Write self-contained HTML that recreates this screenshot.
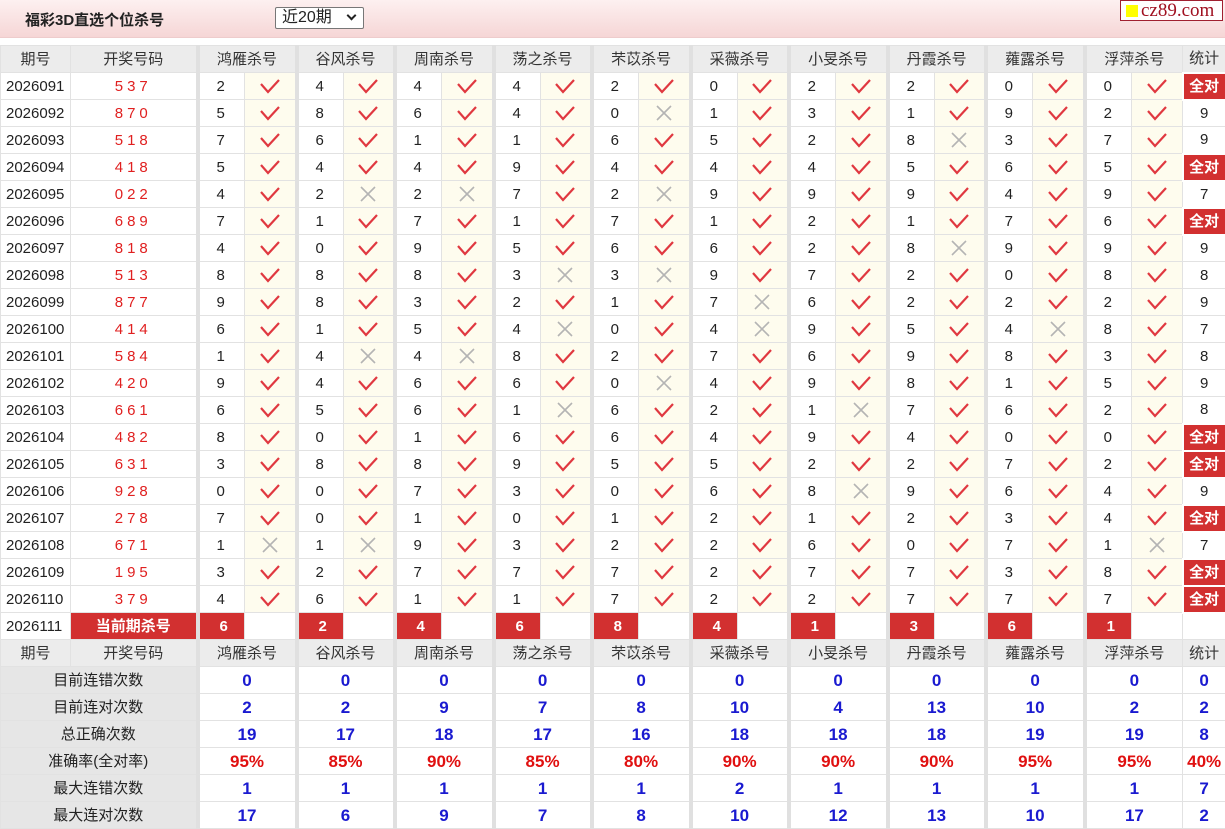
<!DOCTYPE html>
<html><head><meta charset="utf-8">
<style>
*{margin:0;padding:0;box-sizing:border-box}
body{width:1225px;height:827px;overflow:hidden;background:#fff;font-family:"Liberation Sans","Noto Sans CJK SC",sans-serif;font-size:15px;color:#222}
.top{position:absolute;left:0;top:0;width:1225px;height:38px;background:linear-gradient(#fdf0f0,#f6d6d6);border-bottom:1px solid #ecc}
.title{position:absolute;left:25px;top:9px;font-weight:bold;font-size:15px;color:#222}
.sel{position:absolute;left:275px;top:7px;width:89px;height:22px;border:1px solid #777;border-radius:2px;background:#fff;font-size:16px;padding-left:6px;line-height:20px}
.sel span{position:absolute;right:8px;top:4px;width:7px;height:7px;border-right:2px solid #222;border-bottom:2px solid #222;transform:rotate(45deg)}
.logo{position:absolute;left:1120px;top:0;width:103px;height:21px;border:1px solid #a02030;background:#fff;font-family:"Liberation Serif",serif;font-size:19px;color:#a01020;line-height:19px;padding-left:20px;overflow:hidden;white-space:nowrap}
.logo:before{content:"";position:absolute;left:5px;top:4px;width:12px;height:12px;background:#ff0}
table{position:absolute;left:0;top:45px;width:1225px;border-collapse:collapse;table-layout:fixed}
td{border:1px solid #e2e2e2;height:27px;padding:0;text-align:center;vertical-align:middle;line-height:25px;white-space:nowrap;overflow:hidden}
tr{height:27px}
.h td{background:#ececec;color:#333}
td.g{border-left:4px solid #e0e0e0}
.p{text-align:left;padding-left:5px}
.d{color:#e02020;letter-spacing:4px}
.n{text-align:left;padding-left:17px}
.y,.x{background:#fefcee}
svg{display:block;margin:0 auto}
.y svg{stroke:#e03840;stroke-width:2.2;fill:none}
.x svg{stroke:#b4b4b4;stroke-width:1.6;fill:none}
.q{background:#d23030;color:#fff;font-weight:bold}
.qa{background:#d23030;color:#fff;font-weight:bold;text-align:left;padding-left:20px}
.s{background:#fff}
.lab{background:#e6e6e6;color:#222}
.b{color:#1a1ad0;font-weight:bold;font-size:17px}
.r{color:#e01010;font-weight:bold;font-size:17px}
.ok{background:#d23030;color:#fff;font-weight:bold;border:2px solid #fff}
</style></head><body>
<div class="top"><div class="title">福彩3D直选个位杀号</div><div class="sel">近20期<span></span></div><div class="logo">cz89.com</div></div>
<svg width="0" height="0" style="position:absolute"><defs>
<symbol id="c" viewBox="0 0 24 18"><path d="M3 7 L10 15 L21 3"/></symbol>
<symbol id="k" viewBox="0 0 24 18"><path d="M5 2 L19 16 M19 2 L5 16"/></symbol>
</defs></svg>
<table>
<colgroup><col style="width:70px"><col style="width:127px">
<col style="width:47px"><col style="width:52px"><col style="width:47px"><col style="width:51px"><col style="width:47px"><col style="width:52px"><col style="width:47px"><col style="width:51px"><col style="width:47px"><col style="width:52px"><col style="width:47px"><col style="width:51px"><col style="width:47px"><col style="width:52px"><col style="width:47px"><col style="width:51px"><col style="width:47px"><col style="width:52px"><col style="width:47px"><col style="width:51px">
<col style="width:43px"></colgroup>
<tr class="h"><td>期号</td><td>开奖号码</td><td class="g" colspan="2">鸿雁杀号</td><td class="g" colspan="2">谷风杀号</td><td class="g" colspan="2">周南杀号</td><td class="g" colspan="2">荡之杀号</td><td class="g" colspan="2">芣苡杀号</td><td class="g" colspan="2">采薇杀号</td><td class="g" colspan="2">小旻杀号</td><td class="g" colspan="2">丹霞杀号</td><td class="g" colspan="2">蕹露杀号</td><td class="g" colspan="2">浮萍杀号</td><td>统计</td></tr>
<tr><td class="p">2026091</td><td class="d">537</td><td class="g n">2</td><td class="y"><svg width="24" height="18"><use href="#c"/></svg></td><td class="g n">4</td><td class="y"><svg width="24" height="18"><use href="#c"/></svg></td><td class="g n">4</td><td class="y"><svg width="24" height="18"><use href="#c"/></svg></td><td class="g n">4</td><td class="y"><svg width="24" height="18"><use href="#c"/></svg></td><td class="g n">2</td><td class="y"><svg width="24" height="18"><use href="#c"/></svg></td><td class="g n">0</td><td class="y"><svg width="24" height="18"><use href="#c"/></svg></td><td class="g n">2</td><td class="y"><svg width="24" height="18"><use href="#c"/></svg></td><td class="g n">2</td><td class="y"><svg width="24" height="18"><use href="#c"/></svg></td><td class="g n">0</td><td class="y"><svg width="24" height="18"><use href="#c"/></svg></td><td class="g n">0</td><td class="y"><svg width="24" height="18"><use href="#c"/></svg></td><td class="ok">全对</td></tr>
<tr><td class="p">2026092</td><td class="d">870</td><td class="g n">5</td><td class="y"><svg width="24" height="18"><use href="#c"/></svg></td><td class="g n">8</td><td class="y"><svg width="24" height="18"><use href="#c"/></svg></td><td class="g n">6</td><td class="y"><svg width="24" height="18"><use href="#c"/></svg></td><td class="g n">4</td><td class="y"><svg width="24" height="18"><use href="#c"/></svg></td><td class="g n">0</td><td class="x"><svg width="24" height="18"><use href="#k"/></svg></td><td class="g n">1</td><td class="y"><svg width="24" height="18"><use href="#c"/></svg></td><td class="g n">3</td><td class="y"><svg width="24" height="18"><use href="#c"/></svg></td><td class="g n">1</td><td class="y"><svg width="24" height="18"><use href="#c"/></svg></td><td class="g n">9</td><td class="y"><svg width="24" height="18"><use href="#c"/></svg></td><td class="g n">2</td><td class="y"><svg width="24" height="18"><use href="#c"/></svg></td><td>9</td></tr>
<tr><td class="p">2026093</td><td class="d">518</td><td class="g n">7</td><td class="y"><svg width="24" height="18"><use href="#c"/></svg></td><td class="g n">6</td><td class="y"><svg width="24" height="18"><use href="#c"/></svg></td><td class="g n">1</td><td class="y"><svg width="24" height="18"><use href="#c"/></svg></td><td class="g n">1</td><td class="y"><svg width="24" height="18"><use href="#c"/></svg></td><td class="g n">6</td><td class="y"><svg width="24" height="18"><use href="#c"/></svg></td><td class="g n">5</td><td class="y"><svg width="24" height="18"><use href="#c"/></svg></td><td class="g n">2</td><td class="y"><svg width="24" height="18"><use href="#c"/></svg></td><td class="g n">8</td><td class="x"><svg width="24" height="18"><use href="#k"/></svg></td><td class="g n">3</td><td class="y"><svg width="24" height="18"><use href="#c"/></svg></td><td class="g n">7</td><td class="y"><svg width="24" height="18"><use href="#c"/></svg></td><td>9</td></tr>
<tr><td class="p">2026094</td><td class="d">418</td><td class="g n">5</td><td class="y"><svg width="24" height="18"><use href="#c"/></svg></td><td class="g n">4</td><td class="y"><svg width="24" height="18"><use href="#c"/></svg></td><td class="g n">4</td><td class="y"><svg width="24" height="18"><use href="#c"/></svg></td><td class="g n">9</td><td class="y"><svg width="24" height="18"><use href="#c"/></svg></td><td class="g n">4</td><td class="y"><svg width="24" height="18"><use href="#c"/></svg></td><td class="g n">4</td><td class="y"><svg width="24" height="18"><use href="#c"/></svg></td><td class="g n">4</td><td class="y"><svg width="24" height="18"><use href="#c"/></svg></td><td class="g n">5</td><td class="y"><svg width="24" height="18"><use href="#c"/></svg></td><td class="g n">6</td><td class="y"><svg width="24" height="18"><use href="#c"/></svg></td><td class="g n">5</td><td class="y"><svg width="24" height="18"><use href="#c"/></svg></td><td class="ok">全对</td></tr>
<tr><td class="p">2026095</td><td class="d">022</td><td class="g n">4</td><td class="y"><svg width="24" height="18"><use href="#c"/></svg></td><td class="g n">2</td><td class="x"><svg width="24" height="18"><use href="#k"/></svg></td><td class="g n">2</td><td class="x"><svg width="24" height="18"><use href="#k"/></svg></td><td class="g n">7</td><td class="y"><svg width="24" height="18"><use href="#c"/></svg></td><td class="g n">2</td><td class="x"><svg width="24" height="18"><use href="#k"/></svg></td><td class="g n">9</td><td class="y"><svg width="24" height="18"><use href="#c"/></svg></td><td class="g n">9</td><td class="y"><svg width="24" height="18"><use href="#c"/></svg></td><td class="g n">9</td><td class="y"><svg width="24" height="18"><use href="#c"/></svg></td><td class="g n">4</td><td class="y"><svg width="24" height="18"><use href="#c"/></svg></td><td class="g n">9</td><td class="y"><svg width="24" height="18"><use href="#c"/></svg></td><td>7</td></tr>
<tr><td class="p">2026096</td><td class="d">689</td><td class="g n">7</td><td class="y"><svg width="24" height="18"><use href="#c"/></svg></td><td class="g n">1</td><td class="y"><svg width="24" height="18"><use href="#c"/></svg></td><td class="g n">7</td><td class="y"><svg width="24" height="18"><use href="#c"/></svg></td><td class="g n">1</td><td class="y"><svg width="24" height="18"><use href="#c"/></svg></td><td class="g n">7</td><td class="y"><svg width="24" height="18"><use href="#c"/></svg></td><td class="g n">1</td><td class="y"><svg width="24" height="18"><use href="#c"/></svg></td><td class="g n">2</td><td class="y"><svg width="24" height="18"><use href="#c"/></svg></td><td class="g n">1</td><td class="y"><svg width="24" height="18"><use href="#c"/></svg></td><td class="g n">7</td><td class="y"><svg width="24" height="18"><use href="#c"/></svg></td><td class="g n">6</td><td class="y"><svg width="24" height="18"><use href="#c"/></svg></td><td class="ok">全对</td></tr>
<tr><td class="p">2026097</td><td class="d">818</td><td class="g n">4</td><td class="y"><svg width="24" height="18"><use href="#c"/></svg></td><td class="g n">0</td><td class="y"><svg width="24" height="18"><use href="#c"/></svg></td><td class="g n">9</td><td class="y"><svg width="24" height="18"><use href="#c"/></svg></td><td class="g n">5</td><td class="y"><svg width="24" height="18"><use href="#c"/></svg></td><td class="g n">6</td><td class="y"><svg width="24" height="18"><use href="#c"/></svg></td><td class="g n">6</td><td class="y"><svg width="24" height="18"><use href="#c"/></svg></td><td class="g n">2</td><td class="y"><svg width="24" height="18"><use href="#c"/></svg></td><td class="g n">8</td><td class="x"><svg width="24" height="18"><use href="#k"/></svg></td><td class="g n">9</td><td class="y"><svg width="24" height="18"><use href="#c"/></svg></td><td class="g n">9</td><td class="y"><svg width="24" height="18"><use href="#c"/></svg></td><td>9</td></tr>
<tr><td class="p">2026098</td><td class="d">513</td><td class="g n">8</td><td class="y"><svg width="24" height="18"><use href="#c"/></svg></td><td class="g n">8</td><td class="y"><svg width="24" height="18"><use href="#c"/></svg></td><td class="g n">8</td><td class="y"><svg width="24" height="18"><use href="#c"/></svg></td><td class="g n">3</td><td class="x"><svg width="24" height="18"><use href="#k"/></svg></td><td class="g n">3</td><td class="x"><svg width="24" height="18"><use href="#k"/></svg></td><td class="g n">9</td><td class="y"><svg width="24" height="18"><use href="#c"/></svg></td><td class="g n">7</td><td class="y"><svg width="24" height="18"><use href="#c"/></svg></td><td class="g n">2</td><td class="y"><svg width="24" height="18"><use href="#c"/></svg></td><td class="g n">0</td><td class="y"><svg width="24" height="18"><use href="#c"/></svg></td><td class="g n">8</td><td class="y"><svg width="24" height="18"><use href="#c"/></svg></td><td>8</td></tr>
<tr><td class="p">2026099</td><td class="d">877</td><td class="g n">9</td><td class="y"><svg width="24" height="18"><use href="#c"/></svg></td><td class="g n">8</td><td class="y"><svg width="24" height="18"><use href="#c"/></svg></td><td class="g n">3</td><td class="y"><svg width="24" height="18"><use href="#c"/></svg></td><td class="g n">2</td><td class="y"><svg width="24" height="18"><use href="#c"/></svg></td><td class="g n">1</td><td class="y"><svg width="24" height="18"><use href="#c"/></svg></td><td class="g n">7</td><td class="x"><svg width="24" height="18"><use href="#k"/></svg></td><td class="g n">6</td><td class="y"><svg width="24" height="18"><use href="#c"/></svg></td><td class="g n">2</td><td class="y"><svg width="24" height="18"><use href="#c"/></svg></td><td class="g n">2</td><td class="y"><svg width="24" height="18"><use href="#c"/></svg></td><td class="g n">2</td><td class="y"><svg width="24" height="18"><use href="#c"/></svg></td><td>9</td></tr>
<tr><td class="p">2026100</td><td class="d">414</td><td class="g n">6</td><td class="y"><svg width="24" height="18"><use href="#c"/></svg></td><td class="g n">1</td><td class="y"><svg width="24" height="18"><use href="#c"/></svg></td><td class="g n">5</td><td class="y"><svg width="24" height="18"><use href="#c"/></svg></td><td class="g n">4</td><td class="x"><svg width="24" height="18"><use href="#k"/></svg></td><td class="g n">0</td><td class="y"><svg width="24" height="18"><use href="#c"/></svg></td><td class="g n">4</td><td class="x"><svg width="24" height="18"><use href="#k"/></svg></td><td class="g n">9</td><td class="y"><svg width="24" height="18"><use href="#c"/></svg></td><td class="g n">5</td><td class="y"><svg width="24" height="18"><use href="#c"/></svg></td><td class="g n">4</td><td class="x"><svg width="24" height="18"><use href="#k"/></svg></td><td class="g n">8</td><td class="y"><svg width="24" height="18"><use href="#c"/></svg></td><td>7</td></tr>
<tr><td class="p">2026101</td><td class="d">584</td><td class="g n">1</td><td class="y"><svg width="24" height="18"><use href="#c"/></svg></td><td class="g n">4</td><td class="x"><svg width="24" height="18"><use href="#k"/></svg></td><td class="g n">4</td><td class="x"><svg width="24" height="18"><use href="#k"/></svg></td><td class="g n">8</td><td class="y"><svg width="24" height="18"><use href="#c"/></svg></td><td class="g n">2</td><td class="y"><svg width="24" height="18"><use href="#c"/></svg></td><td class="g n">7</td><td class="y"><svg width="24" height="18"><use href="#c"/></svg></td><td class="g n">6</td><td class="y"><svg width="24" height="18"><use href="#c"/></svg></td><td class="g n">9</td><td class="y"><svg width="24" height="18"><use href="#c"/></svg></td><td class="g n">8</td><td class="y"><svg width="24" height="18"><use href="#c"/></svg></td><td class="g n">3</td><td class="y"><svg width="24" height="18"><use href="#c"/></svg></td><td>8</td></tr>
<tr><td class="p">2026102</td><td class="d">420</td><td class="g n">9</td><td class="y"><svg width="24" height="18"><use href="#c"/></svg></td><td class="g n">4</td><td class="y"><svg width="24" height="18"><use href="#c"/></svg></td><td class="g n">6</td><td class="y"><svg width="24" height="18"><use href="#c"/></svg></td><td class="g n">6</td><td class="y"><svg width="24" height="18"><use href="#c"/></svg></td><td class="g n">0</td><td class="x"><svg width="24" height="18"><use href="#k"/></svg></td><td class="g n">4</td><td class="y"><svg width="24" height="18"><use href="#c"/></svg></td><td class="g n">9</td><td class="y"><svg width="24" height="18"><use href="#c"/></svg></td><td class="g n">8</td><td class="y"><svg width="24" height="18"><use href="#c"/></svg></td><td class="g n">1</td><td class="y"><svg width="24" height="18"><use href="#c"/></svg></td><td class="g n">5</td><td class="y"><svg width="24" height="18"><use href="#c"/></svg></td><td>9</td></tr>
<tr><td class="p">2026103</td><td class="d">661</td><td class="g n">6</td><td class="y"><svg width="24" height="18"><use href="#c"/></svg></td><td class="g n">5</td><td class="y"><svg width="24" height="18"><use href="#c"/></svg></td><td class="g n">6</td><td class="y"><svg width="24" height="18"><use href="#c"/></svg></td><td class="g n">1</td><td class="x"><svg width="24" height="18"><use href="#k"/></svg></td><td class="g n">6</td><td class="y"><svg width="24" height="18"><use href="#c"/></svg></td><td class="g n">2</td><td class="y"><svg width="24" height="18"><use href="#c"/></svg></td><td class="g n">1</td><td class="x"><svg width="24" height="18"><use href="#k"/></svg></td><td class="g n">7</td><td class="y"><svg width="24" height="18"><use href="#c"/></svg></td><td class="g n">6</td><td class="y"><svg width="24" height="18"><use href="#c"/></svg></td><td class="g n">2</td><td class="y"><svg width="24" height="18"><use href="#c"/></svg></td><td>8</td></tr>
<tr><td class="p">2026104</td><td class="d">482</td><td class="g n">8</td><td class="y"><svg width="24" height="18"><use href="#c"/></svg></td><td class="g n">0</td><td class="y"><svg width="24" height="18"><use href="#c"/></svg></td><td class="g n">1</td><td class="y"><svg width="24" height="18"><use href="#c"/></svg></td><td class="g n">6</td><td class="y"><svg width="24" height="18"><use href="#c"/></svg></td><td class="g n">6</td><td class="y"><svg width="24" height="18"><use href="#c"/></svg></td><td class="g n">4</td><td class="y"><svg width="24" height="18"><use href="#c"/></svg></td><td class="g n">9</td><td class="y"><svg width="24" height="18"><use href="#c"/></svg></td><td class="g n">4</td><td class="y"><svg width="24" height="18"><use href="#c"/></svg></td><td class="g n">0</td><td class="y"><svg width="24" height="18"><use href="#c"/></svg></td><td class="g n">0</td><td class="y"><svg width="24" height="18"><use href="#c"/></svg></td><td class="ok">全对</td></tr>
<tr><td class="p">2026105</td><td class="d">631</td><td class="g n">3</td><td class="y"><svg width="24" height="18"><use href="#c"/></svg></td><td class="g n">8</td><td class="y"><svg width="24" height="18"><use href="#c"/></svg></td><td class="g n">8</td><td class="y"><svg width="24" height="18"><use href="#c"/></svg></td><td class="g n">9</td><td class="y"><svg width="24" height="18"><use href="#c"/></svg></td><td class="g n">5</td><td class="y"><svg width="24" height="18"><use href="#c"/></svg></td><td class="g n">5</td><td class="y"><svg width="24" height="18"><use href="#c"/></svg></td><td class="g n">2</td><td class="y"><svg width="24" height="18"><use href="#c"/></svg></td><td class="g n">2</td><td class="y"><svg width="24" height="18"><use href="#c"/></svg></td><td class="g n">7</td><td class="y"><svg width="24" height="18"><use href="#c"/></svg></td><td class="g n">2</td><td class="y"><svg width="24" height="18"><use href="#c"/></svg></td><td class="ok">全对</td></tr>
<tr><td class="p">2026106</td><td class="d">928</td><td class="g n">0</td><td class="y"><svg width="24" height="18"><use href="#c"/></svg></td><td class="g n">0</td><td class="y"><svg width="24" height="18"><use href="#c"/></svg></td><td class="g n">7</td><td class="y"><svg width="24" height="18"><use href="#c"/></svg></td><td class="g n">3</td><td class="y"><svg width="24" height="18"><use href="#c"/></svg></td><td class="g n">0</td><td class="y"><svg width="24" height="18"><use href="#c"/></svg></td><td class="g n">6</td><td class="y"><svg width="24" height="18"><use href="#c"/></svg></td><td class="g n">8</td><td class="x"><svg width="24" height="18"><use href="#k"/></svg></td><td class="g n">9</td><td class="y"><svg width="24" height="18"><use href="#c"/></svg></td><td class="g n">6</td><td class="y"><svg width="24" height="18"><use href="#c"/></svg></td><td class="g n">4</td><td class="y"><svg width="24" height="18"><use href="#c"/></svg></td><td>9</td></tr>
<tr><td class="p">2026107</td><td class="d">278</td><td class="g n">7</td><td class="y"><svg width="24" height="18"><use href="#c"/></svg></td><td class="g n">0</td><td class="y"><svg width="24" height="18"><use href="#c"/></svg></td><td class="g n">1</td><td class="y"><svg width="24" height="18"><use href="#c"/></svg></td><td class="g n">0</td><td class="y"><svg width="24" height="18"><use href="#c"/></svg></td><td class="g n">1</td><td class="y"><svg width="24" height="18"><use href="#c"/></svg></td><td class="g n">2</td><td class="y"><svg width="24" height="18"><use href="#c"/></svg></td><td class="g n">1</td><td class="y"><svg width="24" height="18"><use href="#c"/></svg></td><td class="g n">2</td><td class="y"><svg width="24" height="18"><use href="#c"/></svg></td><td class="g n">3</td><td class="y"><svg width="24" height="18"><use href="#c"/></svg></td><td class="g n">4</td><td class="y"><svg width="24" height="18"><use href="#c"/></svg></td><td class="ok">全对</td></tr>
<tr><td class="p">2026108</td><td class="d">671</td><td class="g n">1</td><td class="x"><svg width="24" height="18"><use href="#k"/></svg></td><td class="g n">1</td><td class="x"><svg width="24" height="18"><use href="#k"/></svg></td><td class="g n">9</td><td class="y"><svg width="24" height="18"><use href="#c"/></svg></td><td class="g n">3</td><td class="y"><svg width="24" height="18"><use href="#c"/></svg></td><td class="g n">2</td><td class="y"><svg width="24" height="18"><use href="#c"/></svg></td><td class="g n">2</td><td class="y"><svg width="24" height="18"><use href="#c"/></svg></td><td class="g n">6</td><td class="y"><svg width="24" height="18"><use href="#c"/></svg></td><td class="g n">0</td><td class="y"><svg width="24" height="18"><use href="#c"/></svg></td><td class="g n">7</td><td class="y"><svg width="24" height="18"><use href="#c"/></svg></td><td class="g n">1</td><td class="x"><svg width="24" height="18"><use href="#k"/></svg></td><td>7</td></tr>
<tr><td class="p">2026109</td><td class="d">195</td><td class="g n">3</td><td class="y"><svg width="24" height="18"><use href="#c"/></svg></td><td class="g n">2</td><td class="y"><svg width="24" height="18"><use href="#c"/></svg></td><td class="g n">7</td><td class="y"><svg width="24" height="18"><use href="#c"/></svg></td><td class="g n">7</td><td class="y"><svg width="24" height="18"><use href="#c"/></svg></td><td class="g n">7</td><td class="y"><svg width="24" height="18"><use href="#c"/></svg></td><td class="g n">2</td><td class="y"><svg width="24" height="18"><use href="#c"/></svg></td><td class="g n">7</td><td class="y"><svg width="24" height="18"><use href="#c"/></svg></td><td class="g n">7</td><td class="y"><svg width="24" height="18"><use href="#c"/></svg></td><td class="g n">3</td><td class="y"><svg width="24" height="18"><use href="#c"/></svg></td><td class="g n">8</td><td class="y"><svg width="24" height="18"><use href="#c"/></svg></td><td class="ok">全对</td></tr>
<tr><td class="p">2026110</td><td class="d">379</td><td class="g n">4</td><td class="y"><svg width="24" height="18"><use href="#c"/></svg></td><td class="g n">6</td><td class="y"><svg width="24" height="18"><use href="#c"/></svg></td><td class="g n">1</td><td class="y"><svg width="24" height="18"><use href="#c"/></svg></td><td class="g n">1</td><td class="y"><svg width="24" height="18"><use href="#c"/></svg></td><td class="g n">7</td><td class="y"><svg width="24" height="18"><use href="#c"/></svg></td><td class="g n">2</td><td class="y"><svg width="24" height="18"><use href="#c"/></svg></td><td class="g n">2</td><td class="y"><svg width="24" height="18"><use href="#c"/></svg></td><td class="g n">7</td><td class="y"><svg width="24" height="18"><use href="#c"/></svg></td><td class="g n">7</td><td class="y"><svg width="24" height="18"><use href="#c"/></svg></td><td class="g n">7</td><td class="y"><svg width="24" height="18"><use href="#c"/></svg></td><td class="ok">全对</td></tr>
<tr><td class="p">2026111</td><td class="q">当前期杀号</td><td class="g qa">6</td><td class="s"></td><td class="g qa">2</td><td class="s"></td><td class="g qa">4</td><td class="s"></td><td class="g qa">6</td><td class="s"></td><td class="g qa">8</td><td class="s"></td><td class="g qa">4</td><td class="s"></td><td class="g qa">1</td><td class="s"></td><td class="g qa">3</td><td class="s"></td><td class="g qa">6</td><td class="s"></td><td class="g qa">1</td><td class="s"></td><td></td></tr>
<tr class="h"><td>期号</td><td>开奖号码</td><td class="g" colspan="2">鸿雁杀号</td><td class="g" colspan="2">谷风杀号</td><td class="g" colspan="2">周南杀号</td><td class="g" colspan="2">荡之杀号</td><td class="g" colspan="2">芣苡杀号</td><td class="g" colspan="2">采薇杀号</td><td class="g" colspan="2">小旻杀号</td><td class="g" colspan="2">丹霞杀号</td><td class="g" colspan="2">蕹露杀号</td><td class="g" colspan="2">浮萍杀号</td><td>统计</td></tr>
<tr><td class="lab" colspan="2">目前连错次数</td><td class="g b" colspan="2">0</td><td class="g b" colspan="2">0</td><td class="g b" colspan="2">0</td><td class="g b" colspan="2">0</td><td class="g b" colspan="2">0</td><td class="g b" colspan="2">0</td><td class="g b" colspan="2">0</td><td class="g b" colspan="2">0</td><td class="g b" colspan="2">0</td><td class="g b" colspan="2">0</td><td class="b">0</td></tr>
<tr><td class="lab" colspan="2">目前连对次数</td><td class="g b" colspan="2">2</td><td class="g b" colspan="2">2</td><td class="g b" colspan="2">9</td><td class="g b" colspan="2">7</td><td class="g b" colspan="2">8</td><td class="g b" colspan="2">10</td><td class="g b" colspan="2">4</td><td class="g b" colspan="2">13</td><td class="g b" colspan="2">10</td><td class="g b" colspan="2">2</td><td class="b">2</td></tr>
<tr><td class="lab" colspan="2">总正确次数</td><td class="g b" colspan="2">19</td><td class="g b" colspan="2">17</td><td class="g b" colspan="2">18</td><td class="g b" colspan="2">17</td><td class="g b" colspan="2">16</td><td class="g b" colspan="2">18</td><td class="g b" colspan="2">18</td><td class="g b" colspan="2">18</td><td class="g b" colspan="2">19</td><td class="g b" colspan="2">19</td><td class="b">8</td></tr>
<tr><td class="lab" colspan="2">准确率(全对率)</td><td class="g r" colspan="2">95%</td><td class="g r" colspan="2">85%</td><td class="g r" colspan="2">90%</td><td class="g r" colspan="2">85%</td><td class="g r" colspan="2">80%</td><td class="g r" colspan="2">90%</td><td class="g r" colspan="2">90%</td><td class="g r" colspan="2">90%</td><td class="g r" colspan="2">95%</td><td class="g r" colspan="2">95%</td><td class="r">40%</td></tr>
<tr><td class="lab" colspan="2">最大连错次数</td><td class="g b" colspan="2">1</td><td class="g b" colspan="2">1</td><td class="g b" colspan="2">1</td><td class="g b" colspan="2">1</td><td class="g b" colspan="2">1</td><td class="g b" colspan="2">2</td><td class="g b" colspan="2">1</td><td class="g b" colspan="2">1</td><td class="g b" colspan="2">1</td><td class="g b" colspan="2">1</td><td class="b">7</td></tr>
<tr><td class="lab" colspan="2">最大连对次数</td><td class="g b" colspan="2">17</td><td class="g b" colspan="2">6</td><td class="g b" colspan="2">9</td><td class="g b" colspan="2">7</td><td class="g b" colspan="2">8</td><td class="g b" colspan="2">10</td><td class="g b" colspan="2">12</td><td class="g b" colspan="2">13</td><td class="g b" colspan="2">10</td><td class="g b" colspan="2">17</td><td class="b">2</td></tr>
</table>
</body></html>
